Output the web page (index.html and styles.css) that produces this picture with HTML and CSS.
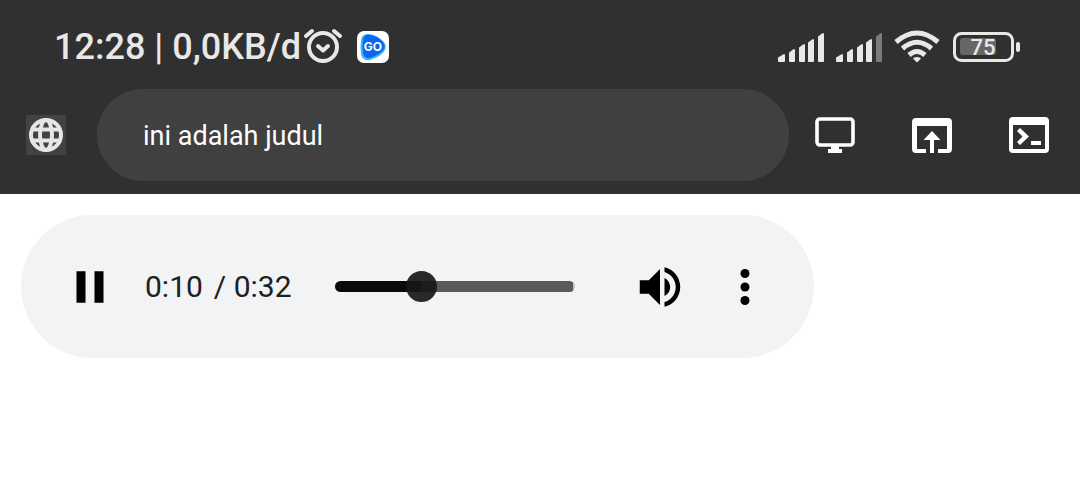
FILE: index.html
```html
<!DOCTYPE html>
<html lang="id">
<head>
<meta charset="utf-8">
<meta name="viewport" content="width=device-width, initial-scale=1">
<title>ini adalah judul</title>
<link rel="stylesheet" href="styles.css">
</head>
<body>
<header class="header">
  <div class="status">
    <span class="status-text">12:28 | 0,0KB/d</span>
    <svg class="alarm" width="40" height="38" viewBox="0 0 40 38" fill="none" stroke="#e8e8e8" stroke-width="4" stroke-linecap="round" stroke-linejoin="round" aria-label="Alarm">
      <circle cx="20" cy="19" r="14"/><path d="M3 8l6-5M37 8l-6-5" stroke-width="4"/><path d="M15 18l5 4.500 5-4.500"/>
    </svg>
    <svg class="go" width="32" height="32" viewBox="0 0 32 32" aria-label="GO">
      <rect width="32" height="32" rx="7" fill="#fff"/>
      <path d="M4 9Q5 2 12 3Q20 4 26 10Q30 14 28 19Q25 25 13 29Q5 30 4 23Q3 16 4 9Z" fill="#43b4fa"/>
      <path d="M6 9Q7 3 13 4Q20 5 25 10Q29 14 27 18Q24 23 13 27Q7 28 6 22Q5 16 6 9Z" fill="#0968ee"/>
      <text class="go-text" x="16" y="20" text-anchor="middle">GO</text>
    </svg>
    <div class="indicators">
      <svg width="105" height="32" viewBox="0 0 105 32" fill="#e8e8e8" stroke="#e8e8e8" stroke-width="2" stroke-linejoin="round" aria-label="Sinyal">
        <path id="bars" d="M1 27L6 24V30H1ZM12 22L16 19V30H12ZM22 17L26 14V30H22ZM31 12L35 9V30H31Z"/>
        <path id="last" d="M41 6L45 3V30H41Z"/>
        <use href="#bars" x="58"/>
        <path d="M99 6L103 3V30H99Z" fill="#7b7b7b" stroke="#7b7b7b"/>
      </svg>
      <svg class="wifi" width="46" height="34" viewBox="0 0 46 34" fill="none" stroke="#e8e8e8" stroke-width="5" aria-label="Wi-Fi">
        <path d="M2 12Q23-6 44 12M8.500 18.500Q23 6 37.500 18.500M15 25Q23 18 31 25"/><path d="M20 28.500Q23 27 26 28.500L23 31.500Z" fill="#e8e8e8" stroke="#e8e8e8" stroke-width="1.500" stroke-linejoin="round"/>
      </svg>
      <svg class="battery" width="67" height="30" viewBox="0 0 67 30" aria-label="Baterai 75">
        <rect x="1.500" y="1.500" width="58" height="27" rx="7" fill="none" stroke="#e8e8e8" stroke-width="3"/>
        <rect x="7" y="6" width="36" height="17" rx="3" fill="#666"/>
        <rect x="63" y="10" width="4" height="10" rx="2" fill="#e8e8e8"/>
        <text class="battery-text" x="30" y="23" text-anchor="middle">75</text>
      </svg>
    </div>
  </div>
  <div class="toolbar">
    <button class="site" aria-label="Situs">
      <svg width="40" height="40" viewBox="0 0 40 40" fill="none" stroke="#e6e6e6" stroke-width="4">
        <circle cx="20" cy="20" r="15"/><ellipse cx="20" cy="20" rx="6" ry="15"/><path d="M6 14.500h28M6 25.500h28"/>
      </svg>
    </button>
    <input class="title" type="text" value="ini adalah judul" aria-label="Judul">
    <div class="actions">
      <button aria-label="Tampilan desktop">
        <svg width="40" height="38" viewBox="0 0 40 38"><rect x="2" y="3" width="36" height="26" rx="3" fill="none" stroke="#fff" stroke-width="3.600"/><path d="M16 29h8v4h3v4H13v-4h3Z" fill="#fff"/></svg>
      </button>
      <button aria-label="Buka di peramban">
        <svg width="40" height="38" viewBox="0 0 40 38" fill="#fff"><path d="M4 2H36Q40 2 40 6V33Q40 37 36 37H26V33H35V10H5V33H14V37H4Q0 37 0 33V6Q0 2 4 2Z"/><path d="M20 15l8.500 9H22v13h-4V24h-6.500Z"/></svg>
      </button>
      <button aria-label="Konsol">
        <svg width="40" height="38" viewBox="0 0 40 38" fill="#fff"><path fill-rule="evenodd" d="M4 1H36Q40 1 40 5V33Q40 37 36 37H4Q0 37 0 33V5Q0 1 4 1ZM4 9V33H36V9Z"/><path d="M11 12l9 8.500-9 8.500-3-3 5.500-5.500L8 15ZM22 25h10v4H22Z"/></svg>
      </button>
    </div>
  </div>
</header>
<main class="page">
  <section class="player" aria-label="Pemutar audio">
    <button aria-label="Jeda"><svg width="54" height="54" viewBox="0 0 24 24"><path d="M6 5h4v14H6ZM14 5h4v14h-4Z"/></svg></button>
    <div class="time"><span>0:10</span><span>/ 0:32</span></div>
    <input class="seek" type="range" min="0" max="100" value="34" aria-label="Posisi">
    <div class="extras">
      <button aria-label="Volume"><svg width="54" height="54" viewBox="0 0 24 24"><path d="M3 9v6h4l5 5V4L7 9H3Zm13.500 3c0-1.770-1.020-3.290-2.500-4.030v8.050c1.480-.73 2.500-2.250 2.500-4.020ZM14 3.230v2.060c2.890.86 5 3.540 5 6.710s-2.110 5.850-5 6.710v2.060c4.010-.91 7-4.490 7-8.770s-2.990-7.860-7-8.770Z"/></svg></button>
      <button aria-label="Opsi lainnya"><svg width="54" height="54" viewBox="0 0 24 24"><circle cx="12" cy="6" r="2"/><circle cx="12" cy="12" r="2"/><circle cx="12" cy="18" r="2"/></svg></button>
    </div>
  </section>
</main>
</body>
</html>
```
FILE: styles.css
```css
* { box-sizing: border-box; }

body {
  margin: 0;
  background: #fff;
  font-family: Roboto, "Liberation Sans", sans-serif;
}

svg { display: block; flex: none; }

button {
  padding: 0;
  border: 0;
  background: none;
}

.header {
  padding-bottom: 13px;
  background: #303030;
}

.status {
  display: flex;
  align-items: center;
  padding: 4px 60px 0 54px;
  height: 89px;
  color: #e8e8e8;
}

.status-text {
  font-size: 36px;
  font-weight: 500;
  line-height: 44px;
  white-space: nowrap;
}

.alarm { margin-left: 2px; }
.go { margin-left: 14px; }

.go-text {
  fill: #fff;
  font-family: Inter, sans-serif;
  font-size: 12px;
  font-weight: 700;
}

.indicators {
  display: flex;
  align-items: center;
  margin-left: auto;
}

.wifi { margin-left: 11px; }
.battery { margin-left: 13px; }

.battery-text {
  fill: #e8e8e8;
  font-size: 22px;
  font-weight: 500;
}

.toolbar {
  display: flex;
  align-items: center;
  padding: 0 31px 0 26px;
}

.site {
  margin-right: 31px;
  background: #424242;
}

.title {
  flex: 1;
  min-width: 0;
  height: 92px;
  padding: 2px 46px 0;
  border: 0;
  border-radius: 46px;
  background: #404040;
  color: #fff;
  font-family: inherit;
  font-size: 27px;
}

.actions {
  display: flex;
  gap: 57px;
  margin-left: 26px;
}

.page { padding: 21px; }

.player {
  display: flex;
  align-items: center;
  width: 100%;
  max-width: 793px;
  height: 143px;
  padding: 0 42px;
  border-radius: 72px;
  background: #f1f3f4;
}

.time {
  display: flex;
  gap: 11px;
  margin-left: 28px;
  color: #202020;
  font-size: 30px;
  line-height: 36px;
  white-space: nowrap;
}

.seek {
  flex: 1;
  min-width: 60px;
  height: 31px;
  margin: 0 58px 0 43px;
  appearance: none;
  background: none;
}

.seek::-webkit-slider-runnable-track {
  height: 11px;
  border-radius: 6px;
  background: linear-gradient(to right, #0a0a0a 36%, #5a5a5a 36% 99%, #c0c0c0 99%);
}

.seek::-webkit-slider-thumb {
  width: 31px;
  height: 31px;
  margin-top: -10px;
  appearance: none;
  border-radius: 50%;
  background: rgba(24, 24, 24, 0.92);
}

.extras {
  display: flex;
  gap: 31px;
}
```
